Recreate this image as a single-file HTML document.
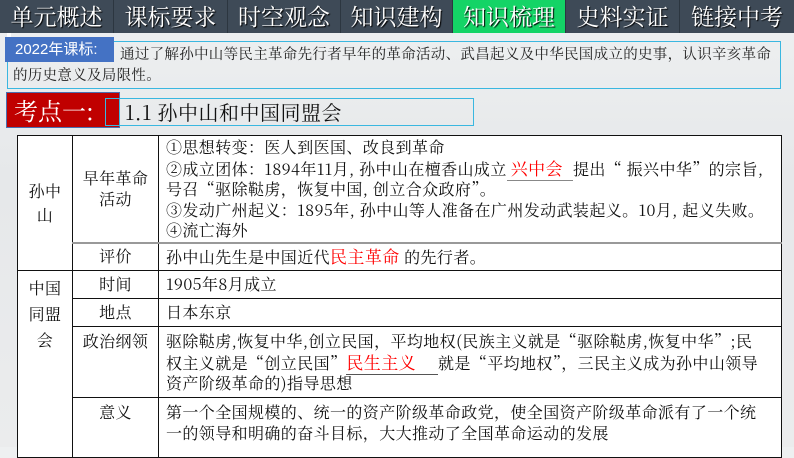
<!DOCTYPE html>
<html><head><meta charset="utf-8"><style>
*{margin:0;padding:0;box-sizing:border-box}
body{width:794px;height:447px;overflow:hidden;position:relative;font-family:"Liberation Serif","Noto Serif CJK SC",serif;background:linear-gradient(180deg,#eef0f1 0%,#e6e8ea 40%,#ebeced 100%)}
.nav{position:absolute;left:0;top:0;width:794px;height:33px;background:#3e4a57;display:flex}
.nav div{height:33px;border-right:1px solid #2c3640;color:#fff;font-size:23px;font-family:"Noto Serif CJK SC",serif;line-height:31px;text-align:center;text-shadow:1px 1px 1px #000}
.a{position:absolute}
td{border:1px solid #111;font-size:16px;letter-spacing:0.4px;color:#111;vertical-align:top;padding:0 3px 0 7px;line-height:20.6px}
</style></head><body>
<div class="nav">
<div style="width:114px">单元概述</div><div style="width:114px">课标要求</div><div style="width:113px">时空观念</div><div style="width:112px">知识建构</div><div style="width:113px;background:#14d466">知识梳理</div><div style="width:114px">史料实证</div><div style="width:114px;border:none">链接中考</div>
</div>
<div class="a" style="left:7px;top:33px;width:4px;height:12px;background:#fff"></div>
<div class="a" style="left:7px;top:41px;width:774px;height:48px;border:1px solid #3ab7e0"></div>
<div class="a" style="left:5px;top:37px;width:109px;height:25px;background:#4472c4;color:#fff;font-family:'Liberation Sans','Noto Sans CJK SC',sans-serif;font-size:15px;line-height:26px;padding-left:10px">2022年课标:</div>
<div class="a" style="left:120px;top:43px;font-size:14.5px;letter-spacing:0.3px;color:#222;font-family:'Noto Serif CJK SC',serif;line-height:21px">通过了解孙中山等民主革命先行者早年的革命活动、武昌起义及中华民国成立的史事，认识辛亥革命</div>
<div class="a" style="left:13px;top:64px;font-size:14.5px;letter-spacing:0.3px;color:#222;font-family:'Noto Serif CJK SC',serif;line-height:21px">的历史意义及局限性。</div>
<div class="a" style="left:105px;top:98px;width:369px;height:28px;border:1px solid #3ab7e0"></div>
<div class="a" style="left:6px;top:92px;width:114px;height:36px;background:#c00000;border:1px solid #4a6fb0;color:#fff;font-size:24px;font-family:'Noto Serif CJK SC',serif;line-height:33px;padding-left:7px">考点一:</div>
<div class="a" style="left:105px;top:98px;width:15px;height:28px;border:1px solid #3ab7e0"></div>
<div class="a" style="left:125px;top:99px;font-size:20px;letter-spacing:0.5px;color:#111;font-family:'Noto Serif CJK SC',serif;line-height:26px">1.1 孙中山和中国同盟会</div>
<table class="a" style="left:17px;top:135px;width:765px;border-collapse:collapse;table-layout:fixed;background:#fff;font-family:'Noto Serif CJK SC',serif">
<colgroup><col style="width:55px"><col style="width:86px"><col></colgroup>
<tr style="height:107px"><td rowspan="2" style="text-align:center;vertical-align:middle;padding:0;line-height:24px">孙中<br>山</td><td style="text-align:center;vertical-align:middle;padding:0;border-bottom:2px solid #999">早年革命<br>活动</td><td style="padding-top:1px;border-bottom:2px solid #999;white-space:nowrap">①思想转变：医人到医国、改良到革命<br>②成立团体：1894年11月, 孙中山在檀香山成立<span style="border-bottom:1px solid #888;color:#f00;font-size:17px;padding:0 10px 0 4px">兴中会</span>提出“ 振兴中华”的宗旨,<br>号召“驱除鞑虏，恢复中国, 创立合众政府”。<br>③发动广州起义：1895年, 孙中山等人准备在广州发动武装起义。10月, 起义失败。<br>④流亡海外</td></tr>
<tr style="height:28px"><td style="text-align:center;vertical-align:middle;padding:0">评价</td><td style="vertical-align:middle">孙中山先生是中国近代<span style="color:#f00;font-size:17px">民主革命</span> 的先行者。</td></tr>
<tr style="height:28px"><td rowspan="4" style="text-align:center;padding:4px 0 0;line-height:26px">中国<br>同盟<br>会</td><td style="text-align:center;vertical-align:middle;padding:0">时间</td><td style="vertical-align:middle">1905年8月成立</td></tr>
<tr style="height:28px"><td style="text-align:center;vertical-align:middle;padding:0">地点</td><td style="vertical-align:middle">日本东京</td></tr>
<tr style="height:71px"><td style="text-align:center;padding:4px 0 0">政治纲领</td><td style="padding-top:4px">驱除鞑虏,恢复中华,创立民国，平均地权(民族主义就是“驱除鞑虏,恢复中华”;民<br>权主义就是“创立民国”<span style="border-bottom:1px solid #555;color:#f00;font-size:17px;padding-right:22px">民生主义</span>就是“平均地权”，三民主义成为孙中山领导<br>资产阶级革命的)指导思想</td></tr>
<tr style="height:60px"><td style="text-align:center;padding:4px 0 0">意义</td><td style="padding-top:4px">第一个全国规模的、统一的资产阶级革命政党，使全国资产阶级革命派有了一个统<br>一的领导和明确的奋斗目标，大大推动了全国革命运动的发展</td></tr>
</table>
</body></html>
